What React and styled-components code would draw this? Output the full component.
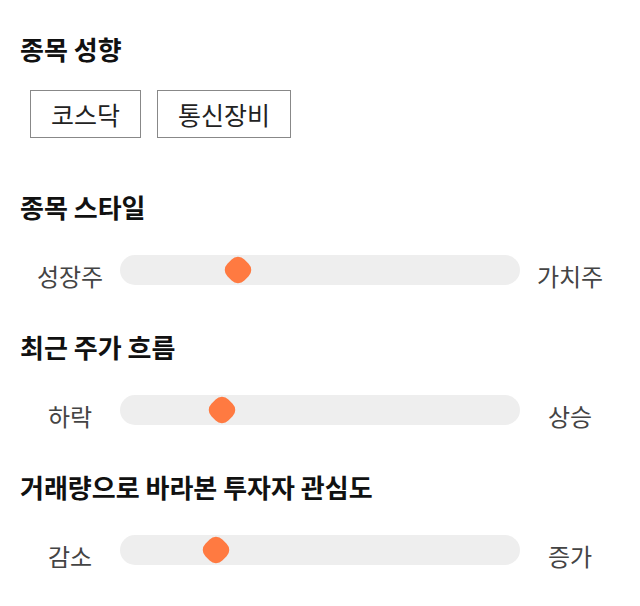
import React from 'react'
import styled, { createGlobalStyle } from 'styled-components'

const GlobalStyle = createGlobalStyle`
  body {
    margin: 0;
    background: #fff;
    font-family: "Noto Sans CJK KR", "Noto Sans", sans-serif;
  }
`

const sliders = [
  { title: '종목 스타일', left: '성장주', right: '가치주', value: 29.6 },
  { title: '최근 주가 흐름', left: '하락', right: '상승', value: 25.6 },
  { title: '거래량으로 바라본 투자자 관심도', left: '감소', right: '증가', value: 24 },
]

function App() {
  return (
    <Page>
      <GlobalStyle />
      <Section>
        <Title>종목 성향</Title>
        <TagList>
          <Tag>코스닥</Tag>
          <Tag>통신장비</Tag>
        </TagList>
      </Section>

      {sliders.map((s) => (
        <Section key={s.title}>
          <Title>{s.title}</Title>
          <Row>
            <Label>{s.left}</Label>
            <Track>
              <Thumb style={{ left: s.value + '%' }} />
            </Track>
            <Label>{s.right}</Label>
          </Row>
        </Section>
      ))}
    </Page>
  )
}

export default App

const Page = styled.div`
  padding: 32px 20px 0;
  display: flex;
  flex-direction: column;
`

const Section = styled.section`
  padding-bottom: 39px;
`

const Title = styled.h2`
  margin: 0 0 31px;
  font-size: 26px;
  line-height: 34px;
  font-weight: 700;
  color: #111;
`

const TagList = styled.div`
  display: flex;
  gap: 16px;
  padding-left: 10px;
  margin-top: -7px;
  margin-bottom: 13px;
`

const Tag = styled.div`
  height: 46px;
  padding: 0 20px;
  border: 1px solid #888;
  font-size: 25px;
  line-height: 46px;
  color: #222;
`

const Row = styled.div`
  display: flex;
  align-items: flex-start;
`

const Label = styled.div`
  width: 100px;
  flex: none;
  text-align: center;
  font-size: 24px;
  line-height: 30px;
  padding-top: 6px;
  color: #444;
`

const Track = styled.div`
  position: relative;
  flex: 1;
  height: 30px;
  border-radius: 15px;
  background: #eee;
`

const Thumb = styled.div`
  position: absolute;
  top: 50%;
  width: 24px;
  height: 24px;
  border-radius: 9px;
  background: #ff7a41;
  transform: translate(-50%, -50%) rotate(45deg);
`
